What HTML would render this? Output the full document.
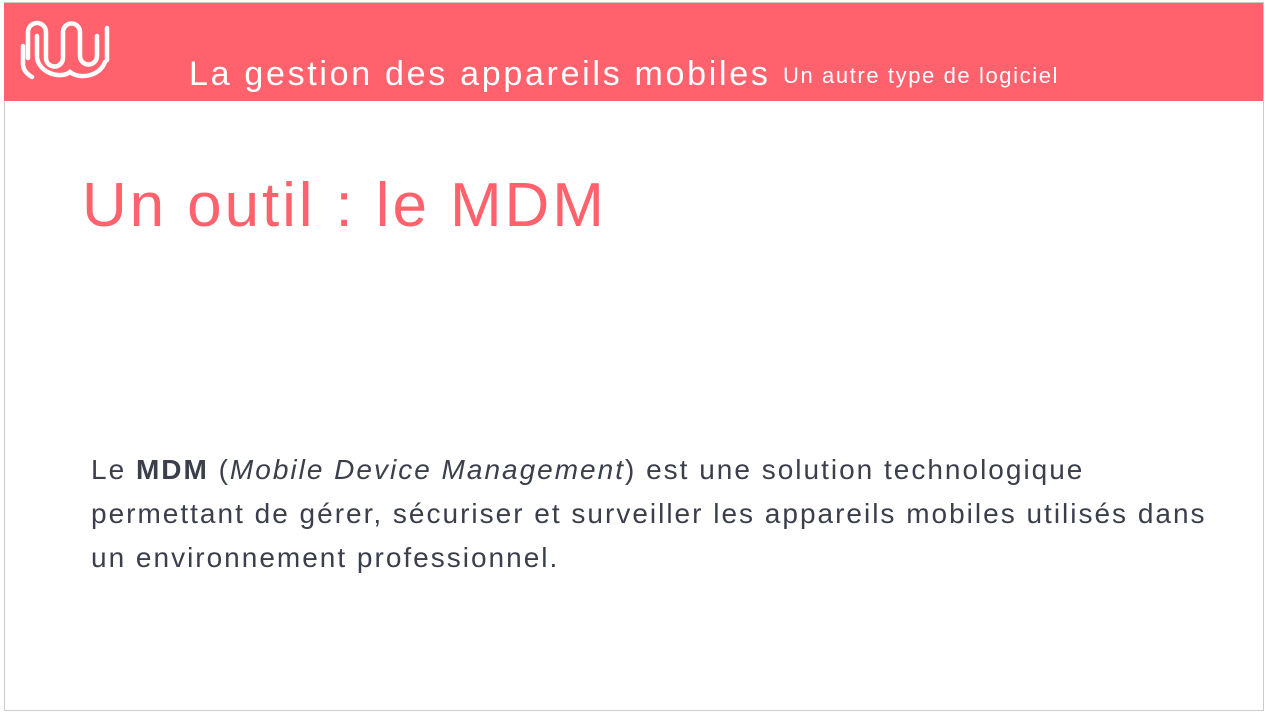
<!DOCTYPE html>
<html><head><meta charset="utf-8"><style>
body{margin:0;width:1266px;height:714px;background:#fff;font-family:"Liberation Sans",sans-serif;position:relative;overflow:hidden}
.frame{position:absolute;left:4px;top:2px;width:1258px;height:707px;border:1px solid #ccc}
.hdr{position:absolute;left:4px;top:3px;width:1259px;height:98px;background:#ff626d}
.t1{position:absolute;left:189px;top:55px;color:#fff;font-size:34px;letter-spacing:2.7px;white-space:nowrap}
.t2{position:absolute;left:783px;top:63px;color:#fff;font-size:22px;letter-spacing:1.6px;white-space:nowrap}
h1{position:absolute;left:82px;top:170px;margin:0;font-weight:normal;color:#ff626d;font-size:62px;letter-spacing:2.9px;white-space:nowrap}
p{position:absolute;left:91px;top:448px;margin:0;width:1130px;color:#3a3f4b;font-size:28px;letter-spacing:2px;line-height:44px}
</style></head><body>
<div class="frame"></div>
<div class="hdr"></div>
<svg style="position:absolute;left:0;top:0" width="130" height="100" fill="none" stroke="#fff" stroke-width="4.5" stroke-linecap="round">
<path d="M28,58 V32 A9,9 0 0 1 46,32 V58 A8.5,8.5 0 0 0 63,58 V32 A8.5,8.5 0 0 1 80,32 V56 A8.5,8.5 0 0 0 97,56 V36"/>
<path d="M37,36 V56 C37,72 60,80 70,72 C80,80 100,76 105,62"/>
<path d="M107,28 V60"/>
<path d="M23,46 V64 C23,70 27,74 32,77"/>
</svg>
<div class="t1">La gestion des appareils mobiles</div>
<div class="t2">Un autre type de logiciel</div>
<h1>Un outil : le MDM</h1>
<p>Le <b>MDM</b> (<i>Mobile Device Management</i>) est une solution technologique permettant de gérer, sécuriser et surveiller les appareils mobiles utilisés dans un environnement professionnel.</p>
</body></html>
